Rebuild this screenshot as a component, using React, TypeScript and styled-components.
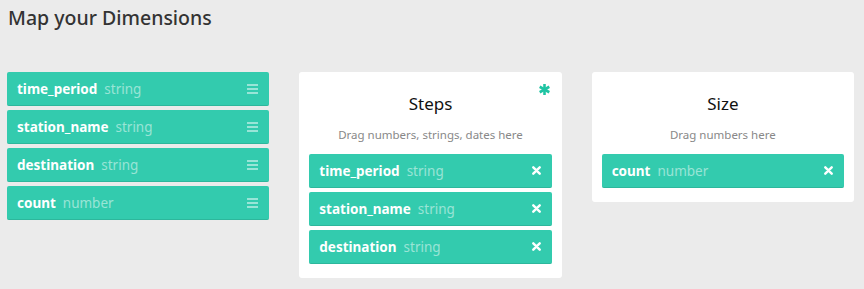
import React from "react";
import styled, { createGlobalStyle } from "styled-components";

const GREEN = "#33cbae";

const Global = createGlobalStyle`
  html, body { margin: 0; padding: 0; background: #ebebeb; }
  body { font-family: "Noto Sans", "Open Sans", sans-serif; }
`;

const Page = styled.div`
  width: 864px;
  height: 289px;
  box-sizing: border-box;
  padding: 4px 10px 0 7px;
`;

const Title = styled.h1`
  margin: 0 0 0 1px;
  font-size: 19.5px;
  font-weight: 500;
  line-height: 28px;
  color: #333;
`;

const Columns = styled.div`
  display: grid;
  grid-template-columns: repeat(3, 1fr);
  column-gap: 30px;
  align-items: start;
  margin-top: 40px;
`;

const List = styled.div`
  display: flex;
  flex-direction: column;
  gap: 4px;
`;

const Card = styled.div`
  background: #fff;
  border-radius: 3px;
  padding: 20px 10px 14px;
  position: relative;
`;

const CardTitle = styled.div`
  text-align: center;
  font-size: 17px;
  line-height: 24px;
  color: #111;
  font-weight: 400;
`;

const CardHint = styled.div`
  text-align: center;
  font-size: 11.5px;
  line-height: 16px;
  color: #888;
  margin: 11px 0 11px;
`;

const Required = styled.span`
  position: absolute;
  top: 12px;
  right: 12px;
  width: 11px;
  height: 11px;
  display: flex;
`;

const Pill = styled.div`
  height: 34px;
  box-sizing: border-box;
  background: ${GREEN};
  border-bottom: 1px solid #2db79c;
  border-radius: 2px;
  display: flex;
  align-items: center;
  padding: 0 11px 0 10px;
  color: #fff;
  font-size: 13.5px;
`;

const Name = styled.span`
  font-weight: 700;
`;

const Type = styled.span`
  margin-left: 7px;
  color: rgba(255, 255, 255, 0.5);
`;

const Spacer = styled.span`
  flex: 1;
`;

const IconBox = styled.span`
  display: flex;
  align-items: center;
`;

const Hamburger = () => (
  <IconBox>
    <svg width="11" height="10" viewBox="0 0 11 10">
      <rect x="0" y="0" width="11" height="2" fill="rgba(255,255,255,0.5)" />
      <rect x="0" y="4" width="11" height="2" fill="rgba(255,255,255,0.5)" />
      <rect x="0" y="8" width="11" height="2" fill="rgba(255,255,255,0.5)" />
    </svg>
  </IconBox>
);

const Close = () => (
  <IconBox>
    <svg width="9" height="9" viewBox="0 0 9 9">
      <path d="M1.3 1.3L7.7 7.7M7.7 1.3L1.3 7.7" stroke="#fff" strokeWidth="2.4" strokeLinecap="round" />
    </svg>
  </IconBox>
);

const Asterisk = () => (
  <svg width="11" height="11" viewBox="0 0 11 11">
    <g stroke="#1fc4a3" strokeWidth="2.6">
      <path d="M5.5 0V11" />
      <path d="M0.7 2.75L10.3 8.25" />
      <path d="M0.7 8.25L10.3 2.75" />
    </g>
  </svg>
);

type Dim = { name: string; type: string };

const dims: Dim[] = [
  { name: "time_period", type: "string" },
  { name: "station_name", type: "string" },
  { name: "destination", type: "string" },
  { name: "count", type: "number" },
];

const DimPill = ({ d, mode }: { d: Dim; mode: "drag" | "remove" }) => (
  <Pill>
    <Name>{d.name}</Name>
    <Type>{d.type}</Type>
    <Spacer />
    {mode === "drag" ? <Hamburger /> : <Close />}
  </Pill>
);

export default function App() {
  return (
    <Page>
      <Global />
      <Title>Map your Dimensions</Title>
      <Columns>
        <List>
          {dims.map((d) => (
            <DimPill key={d.name} d={d} mode="drag" />
          ))}
        </List>
        <Card>
          <Required>
            <Asterisk />
          </Required>
          <CardTitle>Steps</CardTitle>
          <CardHint>Drag numbers, strings, dates here</CardHint>
          <List>
            {dims.slice(0, 3).map((d) => (
              <DimPill key={d.name} d={d} mode="remove" />
            ))}
          </List>
        </Card>
        <Card>
          <CardTitle>Size</CardTitle>
          <CardHint>Drag numbers here</CardHint>
          <List>
            <DimPill d={dims[3]} mode="remove" />
          </List>
        </Card>
      </Columns>
    </Page>
  );
}
